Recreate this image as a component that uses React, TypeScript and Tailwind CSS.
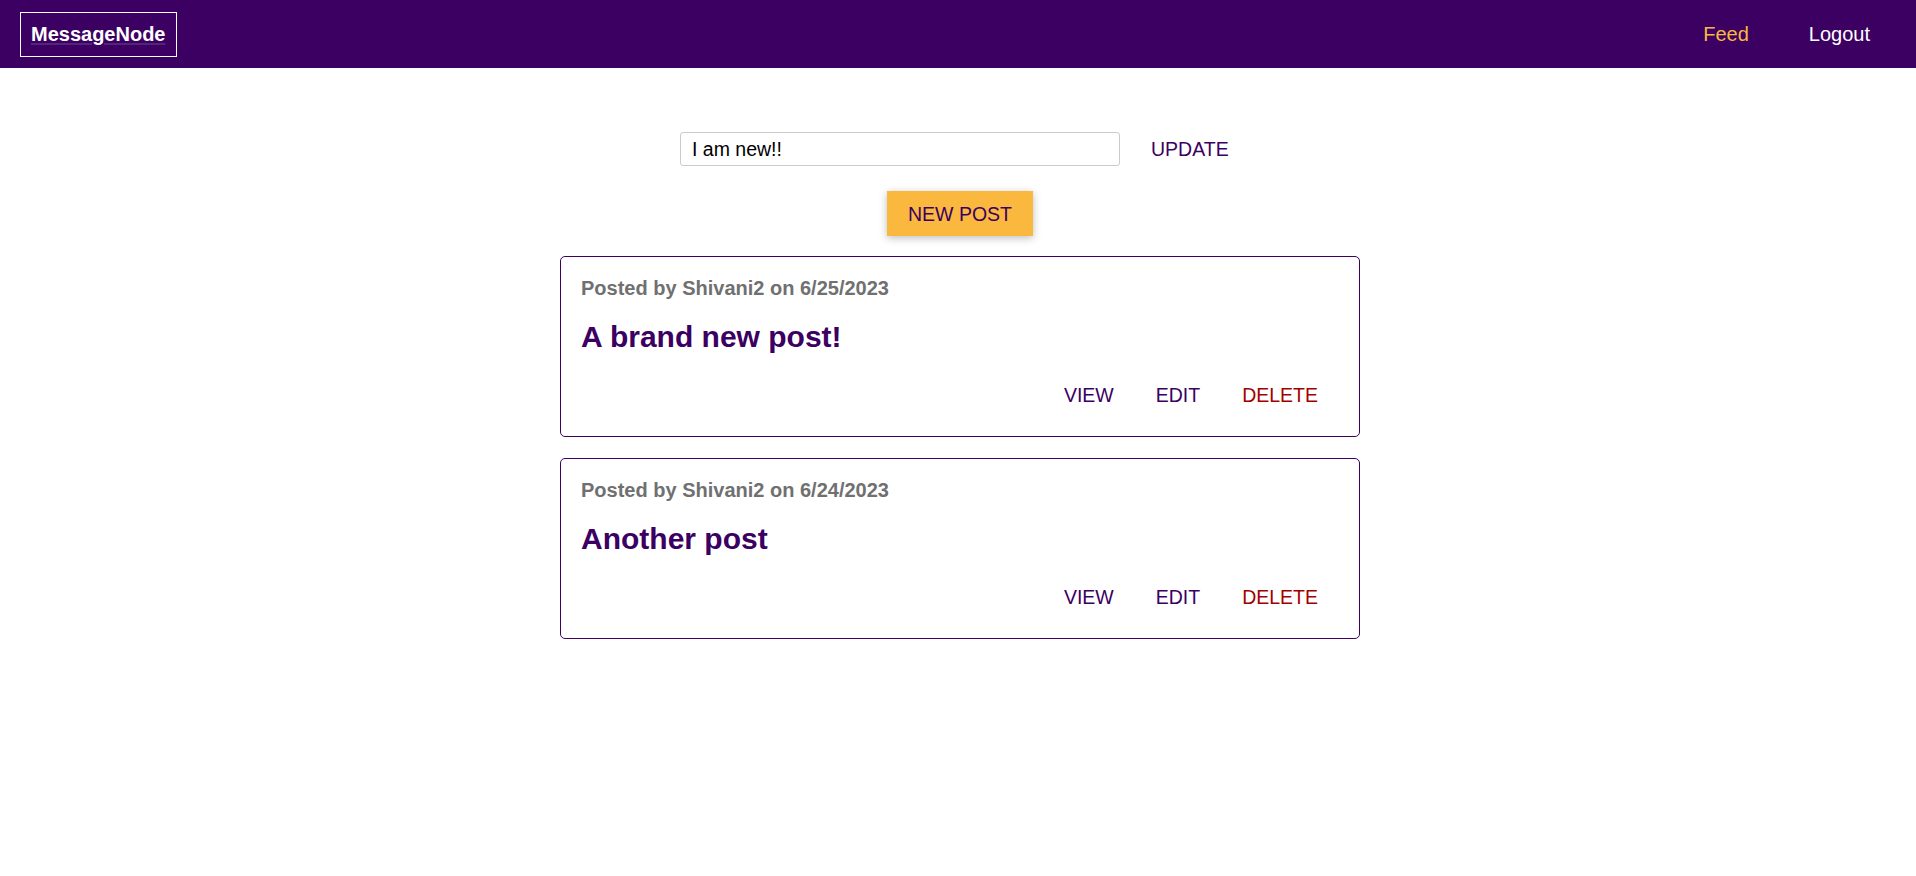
const posts = [
  { id: "p1", creator: "Shivani2", date: "6/25/2023", title: "A brand new post!" },
  { id: "p2", creator: "Shivani2", date: "6/24/2023", title: "Another post" },
];

const Header = () => (
  <header className="h-[68px] bg-[#3b0062] flex items-center justify-between pl-5 pr-[46px]">
    <div className="border border-white h-[45px] px-[10px] flex items-center">
      <a href="#" className="text-white text-[20px] leading-[24px] font-bold underline decoration-[#55237f] underline-offset-2">
        MessageNode
      </a>
    </div>
    <nav className="flex items-center gap-[60px] text-[20px] leading-[24px]">
      <a href="#" className="text-[#fab83f]">Feed</a>
      <a href="#" className="text-white">Logout</a>
    </nav>
  </header>
);

const PostCard = ({ creator, date, title }: { creator: string; date: string; title: string }) => (
  <article className="border border-[#3b0062] rounded-[5px] p-5">
    <div className="text-[#707070] font-bold text-[20px] leading-[22px]">
      Posted by {creator} on {date}
    </div>
    <h1 className="text-[#3b0062] font-bold text-[30px] leading-[34px] mt-[21px]">{title}</h1>
    <div className="flex justify-end mt-5 text-[19.5px] leading-[22px]">
      <button className="px-[21px] py-[10px] text-[#3b0062]">VIEW</button>
      <button className="px-[21px] py-[10px] text-[#3b0062]">EDIT</button>
      <button className="px-[21px] py-[10px] text-[#a30000]">DELETE</button>
    </div>
  </article>
);

export default function App() {
  return (
    <div className="min-h-screen bg-white font-['Liberation_Sans',Arial,sans-serif]">
      <Header />
      <main className="pt-[64px] pl-[4px] flex flex-col items-center">
        <form className="w-[600px] flex items-center pl-[20px]" onSubmit={(e) => e.preventDefault()}>
          <input
            defaultValue="I am new!!"
            className="w-[440px] h-[34px] border border-[#ccc] rounded-[3px] px-[11px] text-[19.5px] text-black outline-none"
          />
          <button type="submit" className="ml-[10px] px-[21px] text-[19.5px] leading-[22px] text-[#3b0062]">
            UPDATE
          </button>
        </form>
        <button className="mt-[25px] h-[45px] px-[21px] bg-[#fab83f] text-[#3b0062] text-[19.5px] leading-[22px] shadow-[0_2px_8px_rgba(0,0,0,0.26)]">
          NEW POST
        </button>
        <section className="w-[800px] mt-5 flex flex-col gap-[21px]">
          {posts.map((p) => (
            <PostCard key={p.id} creator={p.creator} date={p.date} title={p.title} />
          ))}
        </section>
      </main>
    </div>
  );
}
